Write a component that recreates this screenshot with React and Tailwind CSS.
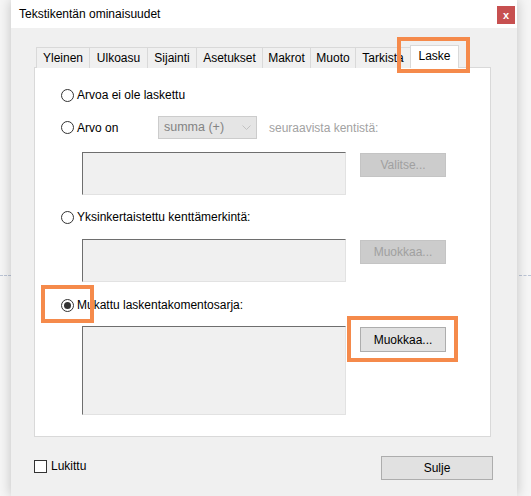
import React from "react"

const Radio = ({ checked }) => (
  <span className="w-[13px] h-[13px] rounded-full border border-[#333333] bg-white flex items-center justify-center shrink-0">
    {checked && <span className="w-[7px] h-[7px] rounded-full bg-[#333333]" />}
  </span>
)

const Field = ({ height }) => (
  <div
    className={`w-[264px] ${height} bg-[#f0f0f0] border border-t-[#6e6e6e] border-l-[#6e6e6e] border-r-[#e2e2e2] border-b-[#e2e2e2]`}
  />
)

const tabs = [
  { label: "Yleinen", w: "w-[54px]" },
  { label: "Ulkoasu", w: "w-[59px]" },
  { label: "Sijainti", w: "w-[50px]" },
  { label: "Asetukset", w: "w-[67px]" },
  { label: "Makrot", w: "w-[49px]" },
  { label: "Muoto", w: "w-[46px]" },
  { label: "Tarkista", w: "w-[56px]" },
]

export default function App() {
  return (
    <div className="relative w-[531px] h-[496px] overflow-hidden flex bg-[#f6f6f6] font-['Liberation_Sans',Arial,sans-serif] text-[12px] text-black">
      {/* left outside strip */}
      <div className="w-[11px] shrink-0 pt-[275px]">
        <div className="border-t border-dashed border-[#bcc5d6]" />
      </div>

      {/* dialog window */}
      <div className="relative z-10 w-[506px] h-[496px] shrink-0 flex flex-col bg-[#f0f0f0] shadow-[0_0_12px_rgba(0,0,0,0.22)]">
        {/* title bar */}
        <div className="h-[28px] bg-white flex items-center justify-between pl-[8px] pr-[2px]">
          <span className="text-[12px] leading-none">Tekstikentän ominaisuudet</span>
          <button className="w-[18px] h-[18px] mt-[2px] bg-[#c75050] text-white text-[11px] font-bold leading-none flex items-center justify-center">
            x
          </button>
        </div>

        <div className="pl-[23px] pt-[17px]">
          {/* tabs */}
          <div className="flex items-end h-[23px] pl-[2px] -mb-px relative z-10">
            {tabs.map((t, i) => (
              <div
                key={t.label}
                className={`${t.w} h-[21px] ${i > 0 ? "-ml-px" : ""} border border-b-0 border-[#d9d9d9] bg-[#f0f0f0] flex items-center justify-center leading-none`}
              >
                {t.label}
              </div>
            ))}
            <div className="w-[49px] h-[23px] -ml-px border border-b-0 border-[#d9d9d9] bg-white flex items-center justify-center pb-[2px] leading-none">
              Laske
            </div>
          </div>

          {/* tab panel */}
          <div className="w-[457px] h-[370px] border border-[#d9d9d9] bg-white pl-[26px] pt-[19px] flex flex-col">
            <div className="h-[16px] flex items-center gap-[3px]">
              <Radio />
              <span>Arvoa ei ole laskettu</span>
            </div>

            <div className="h-[23px] mt-[13px] flex items-center">
              <div className="w-[97px] flex items-center gap-[3px]">
                <Radio />
                <span>Arvo on</span>
              </div>
              <div className="w-[99px] h-[23px] border border-[#cccccc] bg-[#e5e5e5] flex items-center">
                <span className="flex-1 pl-[5px] text-[#838383] text-[12.5px]">summa (+)</span>
                <span className="w-[20px] h-full flex items-center justify-center">
                  <svg width="9" height="5" viewBox="0 0 9 5">
                    <path d="M0.5 0.5 L4.5 4.5 L8.5 0.5" fill="none" stroke="#c2c2c2" strokeWidth="1" />
                  </svg>
                </span>
              </div>
              <span className="ml-[12px] text-[#a2a2a2]">seuraavista kentistä:</span>
            </div>

            <div className="mt-[13px] ml-[21px] flex items-start gap-[14px]">
              <Field height="h-[43px]" />
              <button className="mt-[1px] w-[86px] h-[24px] bg-[#cccccc] border border-[#c4c4c4] text-[#a0a0a0]">
                Valitse...
              </button>
            </div>

            <div className="h-[16px] mt-[14px] flex items-center gap-[3px]">
              <Radio />
              <span>Yksinkertaistettu kenttämerkintä:</span>
            </div>

            <div className="mt-[14px] ml-[21px] flex items-start gap-[14px]">
              <Field height="h-[43px]" />
              <button className="mt-[1px] w-[86px] h-[24px] bg-[#cccccc] border border-[#c4c4c4] text-[#a0a0a0]">
                Muokkaa...
              </button>
            </div>

            <div className="h-[16px] mt-[15px] flex items-center gap-[3px]">
              <Radio checked />
              <span>Mukattu laskentakomentosarja:</span>
            </div>

            <div className="mt-[13px] ml-[21px] flex items-start gap-[14px]">
              <Field height="h-[89px]" />
              <button className="mt-[1px] w-[86px] h-[25px] bg-[#e1e1e1] border border-[#adadad]">
                Muokkaa...
              </button>
            </div>
          </div>

          {/* bottom row */}
          <div className="w-[459px] mt-[19px] flex items-start justify-between">
            <label className="flex items-center gap-[4px] mt-[1px]">
              <span className="w-[13px] h-[13px] border border-[#333333] bg-white" />
              <span>Lukittu</span>
            </label>
            <button className="w-[112px] h-[24px] bg-[#e1e1e1] border border-[#adadad]">
              Sulje
            </button>
          </div>
        </div>
      </div>

      {/* right outside strip */}
      <div className="flex-1 pt-[275px] pl-[2px]">
        <div className="border-t border-dashed border-[#bcc5d6]" />
      </div>

      {/* annotation boxes */}
      <div className="absolute z-20 left-[397px] top-[37px] w-[73px] h-[36px] border-4 border-[#f58a4b]" />
      <div className="absolute z-20 left-[41px] top-[285px] w-[53px] h-[38px] border-4 border-[#f58a4b]" />
      <div className="absolute z-20 left-[347px] top-[316px] w-[111px] h-[46px] border-4 border-[#f58a4b]" />
    </div>
  )
}
